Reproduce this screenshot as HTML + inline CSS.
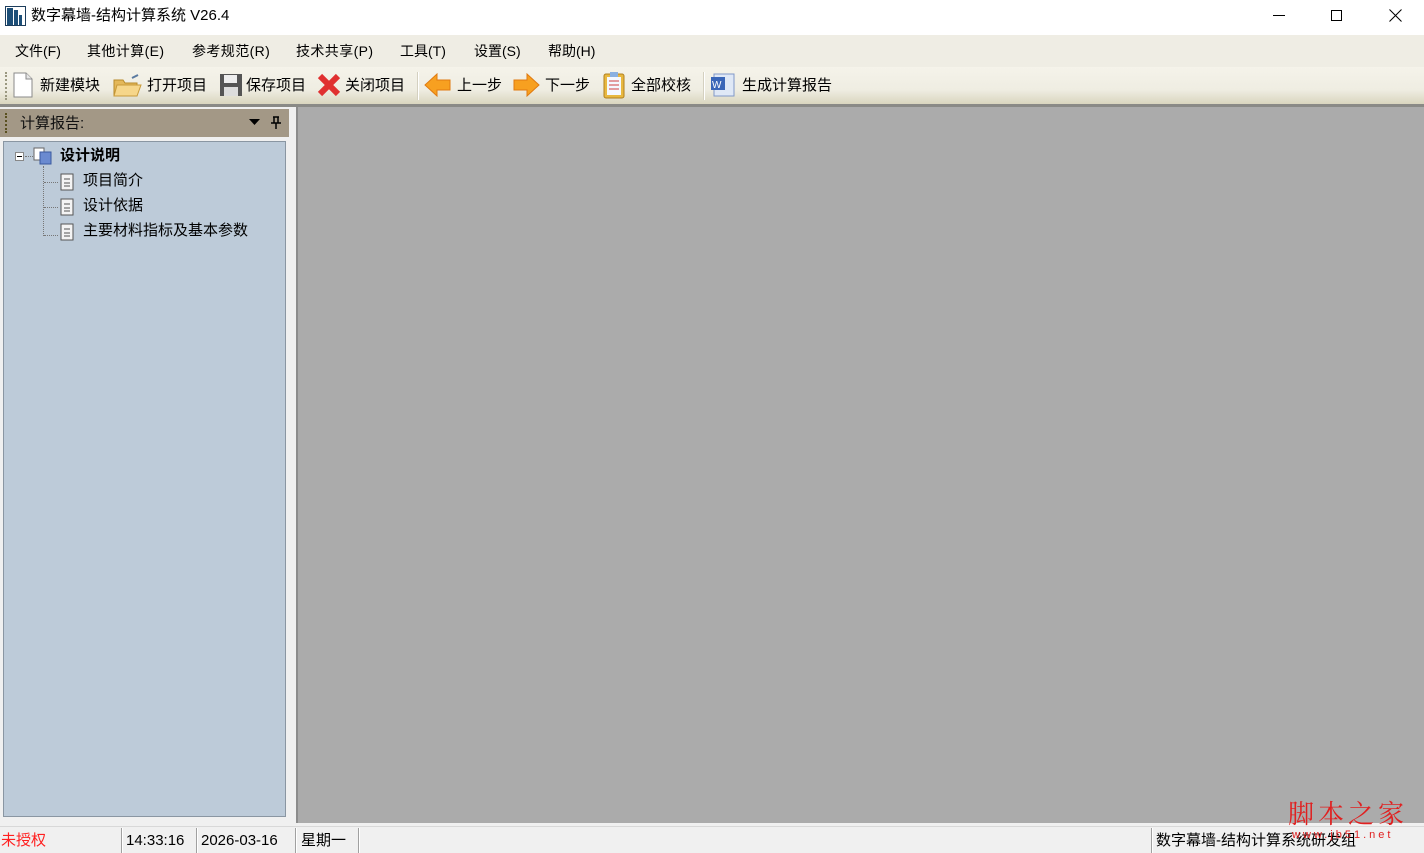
<!DOCTYPE html>
<html><head><meta charset="utf-8"><style>
*{margin:0;padding:0;box-sizing:border-box}
body{width:1424px;height:853px;position:relative;overflow:hidden;background:#f0f0f0;font-family:"Liberation Sans","Noto Sans CJK SC",sans-serif;font-size:15px;color:#000}
.a{position:absolute}
.t{white-space:nowrap;line-height:18px}
.m{font-size:14px}
</style></head><body>
<div class="a" style="left:0;top:0;width:1424px;height:35px;background:#fff"></div>
<svg class="a" style="left:5px;top:6px" width="21" height="20"><rect x="0.5" y="0.5" width="20" height="19" fill="#fff" stroke="#1d3d5c"/><rect x="2" y="2" width="6" height="17" fill="#1d4f78"/><rect x="9" y="4" width="4" height="15" fill="#1d4f78"/><rect x="14" y="9" width="3" height="10" fill="#1d4f78"/></svg>
<div class="a t" style="left:31px;top:7px;font-size:15px">数字幕墙-结构计算系统 V26.4</div>
<div class="a" style="left:1273px;top:15px;width:12px;height:1px;background:#000"></div>
<div class="a" style="left:1331px;top:10px;width:11px;height:11px;border:1px solid #000"></div>
<svg class="a" style="left:1389px;top:9px" width="13" height="13"><path d="M0.5 0.5L12.5 12.5M12.5 0.5L0.5 12.5" stroke="#000"/></svg>
<div class="a" style="left:0;top:35px;width:1424px;height:32px;background:#efede4"></div>
<div class="a t m" style="left:15px;top:42px">文件(F)</div>
<div class="a t m" style="left:87px;top:42px;letter-spacing:0.4px">其他计算(E)</div>
<div class="a t m" style="left:192px;top:42px;letter-spacing:0.4px">参考规范(R)</div>
<div class="a t m" style="left:296px;top:42px;letter-spacing:0.4px">技术共享(P)</div>
<div class="a t m" style="left:400px;top:42px">工具(T)</div>
<div class="a t m" style="left:474px;top:42px">设置(S)</div>
<div class="a t m" style="left:548px;top:42px">帮助(H)</div>
<div class="a" style="left:0;top:67px;width:1424px;height:38px;background:linear-gradient(#f5f3ea,#efede2 60%,#d8d4bc)"></div>
<div class="a" style="left:0;top:104px;width:1424px;height:3px;background:#8a8a86"></div>
<div class="a" style="left:5px;top:72px;width:2px;height:28px;border-left:2px dotted #9a9880"></div>
<svg class="a" style="left:12px;top:72px" width="22" height="26"><path d="M2 1h12l6 6v18H2z" fill="#fff" stroke="#8a8a8a"/><path d="M14 1v6h6" fill="#e6e6e6" stroke="#8a8a8a"/></svg>
<div class="a t" style="left:40px;top:77px">新建模块</div>
<svg class="a" style="left:112px;top:72px" width="30" height="26"><path d="M2 8h9l2 3h12v13H2z" fill="#e4b85a" stroke="#b88a2a"/><path d="M5 13h24l-4 11H2z" fill="#f6d68a" stroke="#c89a3a"/><path d="M20 6l6-3" stroke="#5a7aa0" stroke-width="2"/></svg>
<div class="a t" style="left:147px;top:77px">打开项目</div>
<svg class="a" style="left:219px;top:73px" width="24" height="24"><rect x="1" y="1" width="22" height="22" fill="#555"/><rect x="5" y="2" width="13" height="8" fill="#eee"/><rect x="5" y="14" width="14" height="9" fill="#ddd"/></svg>
<div class="a t" style="left:246px;top:77px">保存项目</div>
<svg class="a" style="left:317px;top:73px" width="24" height="24"><path d="M3 3L21 21M21 3L3 21" stroke="#e03030" stroke-width="6"/></svg>
<div class="a t" style="left:345px;top:77px">关闭项目</div>
<div class="a" style="left:417px;top:72px;width:2px;height:28px;background:#d4d0c0;border-right:1px solid #fff"></div>
<svg class="a" style="left:424px;top:73px" width="28" height="24"><path d="M1 12L13 1v6h13v10H13v6z" fill="#f7a020" stroke="#e07a10"/></svg>
<div class="a t" style="left:457px;top:77px">上一步</div>
<svg class="a" style="left:512px;top:73px" width="28" height="24"><path d="M27 12L15 1v6H2v10h13v6z" fill="#f7a020" stroke="#e07a10"/></svg>
<div class="a t" style="left:545px;top:77px">下一步</div>
<svg class="a" style="left:602px;top:71px" width="24" height="28"><rect x="2" y="3" width="20" height="24" rx="2" fill="#e8b840" stroke="#b08020"/><rect x="5" y="6" width="14" height="18" fill="#f4f8ff"/><rect x="8" y="1" width="8" height="5" fill="#8ab0e0"/><path d="M7 10h10M7 14h10M7 18h10" stroke="#d04040"/></svg>
<div class="a t" style="left:631px;top:77px">全部校核</div>
<div class="a" style="left:703px;top:72px;width:2px;height:28px;background:#d4d0c0;border-right:1px solid #fff"></div>
<svg class="a" style="left:710px;top:72px" width="26" height="26"><rect x="4" y="2" width="20" height="22" fill="#dfe8f6" stroke="#8098c8"/><rect x="1" y="5" width="14" height="13" fill="#3a66b8"/><text x="2" y="16" font-size="10" fill="#fff" font-family="Liberation Sans">W</text></svg>
<div class="a t" style="left:742px;top:77px">生成计算报告</div>
<div class="a" style="left:0;top:109px;width:289px;height:28px;background:#a39886"></div>
<div class="a" style="left:5px;top:113px;height:20px;border-left:2px dotted #5a5020"></div>
<div class="a t" style="left:20px;top:115px;color:#111">计算报告:</div>
<svg class="a" style="left:249px;top:119px" width="12" height="8"><path d="M0 0h11L5.5 6z" fill="#000"/></svg>
<svg class="a" style="left:270px;top:116px" width="12" height="14"><path d="M3 1h6M4 1v6M8 1v6M1 7h10M6 7v6" stroke="#000" stroke-width="1.5" fill="none"/></svg>
<div class="a" style="left:3px;top:141px;width:283px;height:676px;background:#bdcbd9;border:1px solid #8a96a2"></div>
<div class="a" style="left:15px;top:152px;width:9px;height:9px;border:1px solid #888;background:#fff"></div>
<div class="a" style="left:17px;top:156px;width:5px;height:1px;background:#000"></div>
<div class="a" style="left:25px;top:156px;width:8px;border-top:1px dotted #777"></div>
<svg class="a" style="left:33px;top:147px" width="20" height="18"><rect x="1" y="1" width="10" height="12" fill="#fff" stroke="#666"/><rect x="7" y="5" width="11" height="12" fill="#6a8ad0" stroke="#3a5aa0"/></svg>
<div class="a t" style="left:60px;top:147px;font-weight:bold">设计说明</div>
<div class="a" style="left:43px;top:166px;height:70px;border-left:1px dotted #777"></div>
<div class="a" style="left:44px;top:182px;width:14px;border-top:1px dotted #777"></div>
<div class="a" style="left:44px;top:207px;width:14px;border-top:1px dotted #777"></div>
<div class="a" style="left:44px;top:235px;width:14px;border-top:1px dotted #777"></div>
<svg class="a" style="left:59px;top:173px" width="16" height="18"><rect x="2" y="1" width="12" height="16" fill="#f4f4f4" stroke="#555"/><path d="M5 6h6M5 10h6M5 13h6" stroke="#555"/></svg>
<svg class="a" style="left:59px;top:198px" width="16" height="18"><rect x="2" y="1" width="12" height="16" fill="#f4f4f4" stroke="#555"/><path d="M5 6h6M5 10h6M5 13h6" stroke="#555"/></svg>
<svg class="a" style="left:59px;top:223px" width="16" height="18"><rect x="2" y="1" width="12" height="16" fill="#f4f4f4" stroke="#555"/><path d="M5 6h6M5 10h6M5 13h6" stroke="#555"/></svg>
<div class="a t" style="left:83px;top:172px">项目简介</div>
<div class="a t" style="left:83px;top:197px">设计依据</div>
<div class="a t" style="left:83px;top:222px">主要材料指标及基本参数</div>
<div class="a" style="left:296px;top:107px;width:1128px;height:716px;background:#ababab;border-left:2px solid #8c8c8c"></div>
<div class="a" style="left:0;top:826px;width:1424px;height:27px;background:#f0f0f0;border-top:1px solid #d8d8d8"></div>
<div class="a" style="left:121px;top:828px;width:2px;height:25px;border-left:1px solid #a0a0a0;border-right:1px solid #fff"></div>
<div class="a" style="left:196px;top:828px;width:2px;height:25px;border-left:1px solid #a0a0a0;border-right:1px solid #fff"></div>
<div class="a" style="left:295px;top:828px;width:2px;height:25px;border-left:1px solid #a0a0a0;border-right:1px solid #fff"></div>
<div class="a" style="left:358px;top:828px;width:2px;height:25px;border-left:1px solid #a0a0a0;border-right:1px solid #fff"></div>
<div class="a" style="left:1151px;top:828px;width:2px;height:25px;border-left:1px solid #a0a0a0;border-right:1px solid #fff"></div>
<div class="a t" style="left:1px;top:832px;color:#ff2020">未授权</div>
<div class="a t" style="left:126px;top:832px;font-size:15px">14:33:16</div>
<div class="a t" style="left:201px;top:832px;font-size:15px">2026-03-16</div>
<div class="a t" style="left:301px;top:832px">星期一</div>
<div class="a t" style="left:1156px;top:832px">数字幕墙-结构计算系统研发组</div>
<div class="a t" style="left:1288px;top:798px;font-size:26px;line-height:30px;color:#e02020;font-family:'Noto Serif CJK SC',serif;letter-spacing:4px">脚本之家</div>
<div class="a t" style="left:1292px;top:826px;font-size:11px;color:#e02020;letter-spacing:3px">www.jb51.net</div>
</body></html>
